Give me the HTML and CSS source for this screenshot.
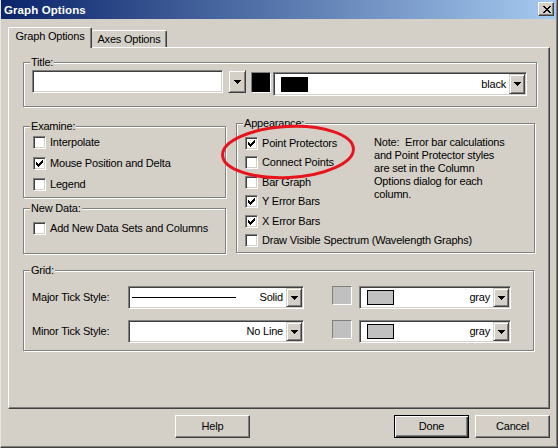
FILE: index.html
```html
<!DOCTYPE html>
<html>
<head>
<meta charset="utf-8">
<title>Graph Options</title>
<link rel="stylesheet" href="styles.css">
</head>
<body>
<div class="window">
  <div class="titlebar">
    <span class="title">Graph Options</span>
    <span class="close"><svg width="8" height="7" viewBox="0 0 8 7" shape-rendering="crispEdges"><path d="M0 0h2v1H0z M6 0h2v1H6z M1 1h2v1H1z M5 1h2v1H5z M2 2h4v1H2z M3 3h2v1H3z M2 4h4v1H2z M1 5h2v1H1z M5 5h2v1H5z M0 6h2v1H0z M6 6h2v1H6z"/></svg></span>
  </div>
  <div class="content">
    <div class="tabs">
      <div class="tab tab-active">Graph Options</div>
      <div class="tab tab-inactive">Axes Options</div>
    </div>
    <div class="panel">
      <div class="group group-title">
        <span class="legend">Title:</span>
        <div class="title-row">
          <div class="sunken tfield"></div>
          <div class="ddbtn ddbtn-free"><svg width="7" height="4" viewBox="0 0 7 4" shape-rendering="crispEdges"><path d="M0 0h7v1H0z M1 1h5v1H1z M2 2h3v1H2z M3 3h1v1H3z"/></svg></div>
          <div class="swatch swatch-black"></div>
          <div class="sunken combo combo-color">
            <span class="cbox cbox-black"></span>
            <span class="combo-text">black</span>
            <div class="ddbtn"><svg width="7" height="4" viewBox="0 0 7 4" shape-rendering="crispEdges"><path d="M0 0h7v1H0z M1 1h5v1H1z M2 2h3v1H2z M3 3h1v1H3z"/></svg></div>
          </div>
        </div>
      </div>

      <div class="middle">
        <div class="left-col">
          <div class="group group-examine">
            <span class="legend">Examine:</span>
            <div class="checklist">
              <label class="check"><span class="cb"></span><span>Interpolate</span></label>
              <label class="check"><span class="cb"><svg width="11" height="11" viewBox="1 1 11 11" shape-rendering="crispEdges"><path d="M3 5h1v3H3z M4 6h1v3H4z M5 7h1v3H5z M6 6h1v3H6z M7 5h1v3H7z M8 4h1v3H8z M9 3h1v3H9z"/></svg></span><span>Mouse Position and Delta</span></label>
              <label class="check"><span class="cb"></span><span>Legend</span></label>
            </div>
          </div>
          <div class="group group-newdata">
            <span class="legend">New Data:</span>
            <label class="check"><span class="cb"></span><span>Add New Data Sets and Columns</span></label>
          </div>
        </div>
        <div class="group group-appearance">
          <span class="legend">Appearance:</span>
          <div class="appearance-grid">
            <label class="check"><span class="cb"><svg width="11" height="11" viewBox="1 1 11 11" shape-rendering="crispEdges"><path d="M3 5h1v3H3z M4 6h1v3H4z M5 7h1v3H5z M6 6h1v3H6z M7 5h1v3H7z M8 4h1v3H8z M9 3h1v3H9z"/></svg></span><span>Point Protectors</span></label>
            <p class="note">Note:&nbsp; Error bar calculations<br>and Point Protector styles<br>are set in the Column<br>Options dialog for each<br>column.</p>
            <label class="check"><span class="cb"></span><span>Connect Points</span></label>
            <label class="check"><span class="cb"></span><span>Bar Graph</span></label>
            <label class="check"><span class="cb"><svg width="11" height="11" viewBox="1 1 11 11" shape-rendering="crispEdges"><path d="M3 5h1v3H3z M4 6h1v3H4z M5 7h1v3H5z M6 6h1v3H6z M7 5h1v3H7z M8 4h1v3H8z M9 3h1v3H9z"/></svg></span><span>Y Error Bars</span></label>
            <label class="check"><span class="cb"><svg width="11" height="11" viewBox="1 1 11 11" shape-rendering="crispEdges"><path d="M3 5h1v3H3z M4 6h1v3H4z M5 7h1v3H5z M6 6h1v3H6z M7 5h1v3H7z M8 4h1v3H8z M9 3h1v3H9z"/></svg></span><span>X Error Bars</span></label>
            <label class="check check-wide"><span class="cb"></span><span>Draw Visible Spectrum (Wavelength Graphs)</span></label>
          </div>
        </div>
      </div>

      <div class="group group-grid">
        <span class="legend">Grid:</span>
        <div class="grid-row">
          <span class="grid-label">Major Tick Style:</span>
          <div class="sunken combo combo-style">
            <span class="line-sample"></span>
            <span class="combo-text">Solid</span>
            <div class="ddbtn"><svg width="7" height="4" viewBox="0 0 7 4" shape-rendering="crispEdges"><path d="M0 0h7v1H0z M1 1h5v1H1z M2 2h3v1H2z M3 3h1v1H3z"/></svg></div>
          </div>
          <div class="swatch swatch-gray"></div>
          <div class="sunken combo combo-gray">
            <span class="cbox cbox-gray"></span>
            <span class="combo-text">gray</span>
            <div class="ddbtn"><svg width="7" height="4" viewBox="0 0 7 4" shape-rendering="crispEdges"><path d="M0 0h7v1H0z M1 1h5v1H1z M2 2h3v1H2z M3 3h1v1H3z"/></svg></div>
          </div>
        </div>
        <div class="grid-row">
          <span class="grid-label">Minor Tick Style:</span>
          <div class="sunken combo combo-style">
            <span class="combo-text">No Line</span>
            <div class="ddbtn"><svg width="7" height="4" viewBox="0 0 7 4" shape-rendering="crispEdges"><path d="M0 0h7v1H0z M1 1h5v1H1z M2 2h3v1H2z M3 3h1v1H3z"/></svg></div>
          </div>
          <div class="swatch swatch-gray"></div>
          <div class="sunken combo combo-gray">
            <span class="cbox cbox-gray"></span>
            <span class="combo-text">gray</span>
            <div class="ddbtn"><svg width="7" height="4" viewBox="0 0 7 4" shape-rendering="crispEdges"><path d="M0 0h7v1H0z M1 1h5v1H1z M2 2h3v1H2z M3 3h1v1H3z"/></svg></div>
          </div>
        </div>
      </div>
    </div>

    <div class="buttons">
      <div class="btn btn-help">Help</div>
      <div class="btn btn-default">Done</div>
      <div class="btn btn-cancel">Cancel</div>
    </div>
  </div>

  <svg class="highlight" width="140" height="60" viewBox="0 0 140 60">
    <ellipse cx="70" cy="29" rx="65.5" ry="25.5" transform="rotate(-3 70 29)" fill="none" stroke="#e8141c" stroke-width="3"/>
  </svg>
</div>
</body>
</html>
```

FILE: styles.css
```css
* { box-sizing: border-box; }

html, body {
  margin: 0;
  padding: 0;
}

body {
  width: 558px;
  height: 448px;
  overflow: hidden;
  background: #d4d0c8;
  font-family: "Liberation Sans", Arial, sans-serif;
  font-size: 11px;
  letter-spacing: -0.2px;
  color: #000;
}

.window {
  position: relative;
  width: 558px;
  height: 448px;
  background: #d4d0c8;
  border-left: 1px solid #e6e4de;
  border-right: 1px solid #404040;
  border-bottom: 1px solid #404040;
  box-shadow: inset -1px -1px #808080;
  display: flex;
  flex-direction: column;
}

/* title bar */
.titlebar {
  height: 19px;
  margin-right: 1px;
  display: flex;
  align-items: center;
  justify-content: space-between;
  padding: 0 2px 0 3px;
  background: linear-gradient(to right, #0a246a, #a6caf0);
}

.title {
  color: #fff;
  font-weight: bold;
  font-size: 11.5px;
  letter-spacing: 0.1px;
}

.close {
  width: 16px;
  height: 14px;
  display: flex;
  align-items: center;
  justify-content: center;
  background: #d4d0c8;
  border: 1px solid;
  border-color: #fff #404040 #404040 #fff;
  box-shadow: inset -1px -1px #808080;
  padding-left: 1px;
  margin-top: -1px;
}

/* content */
.content {
  padding: 8px 0 0 7px;
  display: flex;
  flex-direction: column;
}

.tabs {
  display: flex;
  align-items: flex-end;
  height: 20px;
  position: relative;
  z-index: 2;
}

.tab {
  background: #d4d0c8;
  border-left: 1px solid #fff;
  border-top: 1px solid #fff;
  border-right: 1px solid #404040;
  box-shadow: inset -1px 0 #808080;
  border-radius: 2px 2px 0 0;
  text-align: center;
}

.tab-active {
  width: 84px;
  height: 21px;
  margin-bottom: -1px;
  line-height: 17px;
}

.tab-inactive {
  width: 75px;
  height: 17px;
  line-height: 17px;
  border-left: none;
}

.panel {
  width: 542px;
  height: 362px;
  border-left: 1px solid #fff;
  border-top: 1px solid #fff;
  border-right: 1px solid #404040;
  border-bottom: 1px solid #404040;
  box-shadow: inset -1px -1px #808080;
  padding: 14px 0 0 14px;
  display: flex;
  flex-direction: column;
}

/* group boxes */
.group {
  position: relative;
  border: 1px solid #808080;
  box-shadow: inset 1px 1px #fff, 1px 1px #fff;
}

.legend {
  position: absolute;
  top: -7px;
  left: 6px;
  padding: 0 1px;
  line-height: 13px;
  background: #d4d0c8;
}

.group-title {
  width: 514px;
  height: 45px;
  padding: 7px 0 0 8px;
}

.title-row {
  display: flex;
  align-items: flex-start;
}

.sunken {
  background: #fff;
  border: 1px solid;
  border-color: #808080 #fff #fff #808080;
  box-shadow: inset 1px 1px #404040, inset -1px -1px #d4d0c8;
}

.tfield {
  width: 191px;
  height: 23px;
}

.ddbtn {
  width: 16px;
  height: 100%;
  flex: none;
  display: flex;
  align-items: center;
  justify-content: center;
  background: #d4d0c8;
  border: 1px solid;
  border-color: #d4d0c8 #404040 #404040 #d4d0c8;
  box-shadow: inset 1px 1px #fff, inset -1px -1px #808080;
}

.ddbtn-free {
  width: 18px;
  height: 23px;
  margin-left: 5px;
}

.swatch {
  width: 20px;
  border: 1px solid;
  border-color: #808080 #fff #fff #808080;
}

.swatch-black {
  height: 21px;
  margin: 2px 0 0 5px;
  background: #000;
}

.swatch-gray {
  height: 19px;
  margin-left: 28px;
  background: #c0c0c0;
}

.combo {
  display: flex;
  align-items: center;
  padding: 1px;
}

.combo-color {
  width: 254px;
  height: 24px;
  margin: 2px 0 0 2px;
}

.cbox {
  width: 27px;
  height: 15px;
  margin-left: 6px;
  border: 1px solid #000;
  flex: none;
}

.cbox-black { background: #000; }
.cbox-gray { background: #c0c0c0; }

.combo-text {
  flex: 1;
  text-align: right;
  padding-right: 3px;
  line-height: 13px;
}

/* middle row */
.middle {
  display: flex;
  align-items: flex-start;
  margin-top: 16px;
}

.left-col {
  display: flex;
  flex-direction: column;
  gap: 10px;
  margin-top: 3px;
}

.group-examine {
  width: 203px;
  height: 72px;
  padding: 9px 0 0 9px;
}

.checklist {
  display: flex;
  flex-direction: column;
  gap: 8px;
}

.check {
  display: flex;
  align-items: center;
  height: 13px;
  line-height: 13px;
  white-space: nowrap;
}

.cb {
  width: 13px;
  height: 13px;
  flex: none;
  margin-right: 4px;
  background: #fff;
  border: 1px solid;
  border-color: #808080 #fff #fff #808080;
  box-shadow: inset 1px 1px #404040, inset -1px -1px #d4d0c8;
}

.cb svg { display: block; }

.group-newdata {
  width: 203px;
  height: 46px;
  padding: 13px 0 0 9px;
}

.group-appearance {
  width: 299px;
  height: 130px;
  margin-left: 10px;
  padding: 13px 0 0 8px;
}

.appearance-grid {
  display: grid;
  grid-template-columns: 129px auto;
  row-gap: 6.4px;
}

.note {
  grid-column: 2;
  grid-row: 1 / span 5;
  margin: -1.5px 0 0 0;
  line-height: 13px;
}

.check-wide {
  grid-column: 1 / -1;
}

/* grid group */
.group-grid {
  width: 511px;
  height: 81px;
  margin-top: 16px;
  padding: 15px 0 0 8px;
  display: flex;
  flex-direction: column;
  gap: 11px;
}

.grid-row {
  display: flex;
  align-items: flex-start;
}

.grid-label {
  width: 96px;
  line-height: 23px;
}

.combo-style {
  width: 176px;
  height: 23px;
}

.line-sample {
  width: 104px;
  height: 1px;
  margin-left: 2px;
  background: #000;
  flex: none;
}

.combo-gray {
  width: 152px;
  height: 23px;
  margin-left: 7px;
}

/* bottom buttons */
.buttons {
  display: flex;
  margin-top: 6px;
}

.btn {
  width: 75px;
  height: 23px;
  line-height: 21px;
  text-align: center;
  background: #d4d0c8;
  border: 1px solid;
  border-color: #fff #404040 #404040 #fff;
  box-shadow: inset -1px -1px #808080;
}

.btn-help { margin-left: 167px; }

.btn-default {
  margin-left: 144px;
  border-color: #000;
  box-shadow: inset 1px 1px #fff, inset -1px -1px #404040, inset -2px -2px #808080;
}

.btn-cancel { margin-left: 6px; }

/* annotation overlay */
.highlight {
  position: absolute;
  left: 217px;
  top: 123px;
}
```
